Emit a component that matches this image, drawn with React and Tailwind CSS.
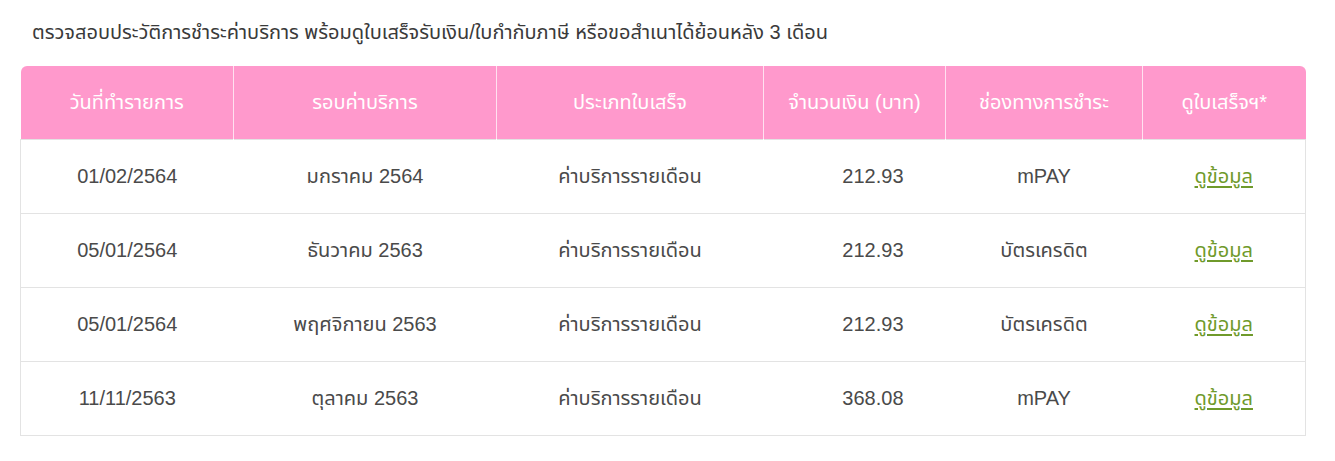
export default function App() {
  const rows = [
    ["01/02/2564", "มกราคม 2564", "ค่าบริการรายเดือน", "212.93", "mPAY"],
    ["05/01/2564", "ธันวาคม 2563", "ค่าบริการรายเดือน", "212.93", "บัตรเครดิต"],
    ["05/01/2564", "พฤศจิกายน 2563", "ค่าบริการรายเดือน", "212.93", "บัตรเครดิต"],
    ["11/11/2563", "ตุลาคม 2563", "ค่าบริการรายเดือน", "368.08", "mPAY"],
  ];
  const font = { fontFamily: '"Liberation Sans", "Noto Sans Thai", sans-serif' };
  return (
    <div className="bg-white w-[1335px] h-[461px] pt-[18px] pl-[20px]" style={font}>
      <div className="pl-[12px] text-[20px] leading-[28px] text-[#3a3a3a]">
        ตรวจสอบประวัติการชำระค่าบริการ พร้อมดูใบเสร็จรับเงิน/ใบกำกับภาษี หรือขอสำเนาได้ย้อนหลัง 3 เดือน
      </div>
      <table className="mt-[20px] w-[1285px] border-collapse table-fixed">
        <colgroup>
          <col className="w-[213px]" />
          <col className="w-[263px]" />
          <col className="w-[267px]" />
          <col className="w-[182px]" />
          <col className="w-[197px]" />
          <col className="w-[163px]" />
        </colgroup>
        <thead>
          <tr className="h-[73px] bg-[#ff99cc] text-white text-[20px]">
            <th className="font-normal rounded-tl-[6px] border-r border-white/70">วันที่ทำรายการ</th>
            <th className="font-normal border-r border-white/70">รอบค่าบริการ</th>
            <th className="font-normal border-r border-white/70">ประเภทใบเสร็จ</th>
            <th className="font-normal border-r border-white/70">จำนวนเงิน (บาท)</th>
            <th className="font-normal border-r border-white/70">ช่องทางการชำระ</th>
            <th className="font-normal rounded-tr-[6px]">ดูใบเสร็จฯ*</th>
          </tr>
        </thead>
        <tbody>
          {rows.map((r, i) => (
            <tr key={i} className="h-[74px] text-[20px] text-[#4a4a4a] border border-[#e3e3e3]">
              <td className="text-center">{r[0]}</td>
              <td className="text-center">{r[1]}</td>
              <td className="text-center">{r[2]}</td>
              <td className="text-right pr-[42px]">{r[3]}</td>
              <td className="text-center">{r[4]}</td>
              <td className="text-center">
                <a href="#" className="text-[#6f9a2b] underline underline-offset-[3px]">ดูข้อมูล</a>
              </td>
            </tr>
          ))}
        </tbody>
      </table>
    </div>
  );
}
